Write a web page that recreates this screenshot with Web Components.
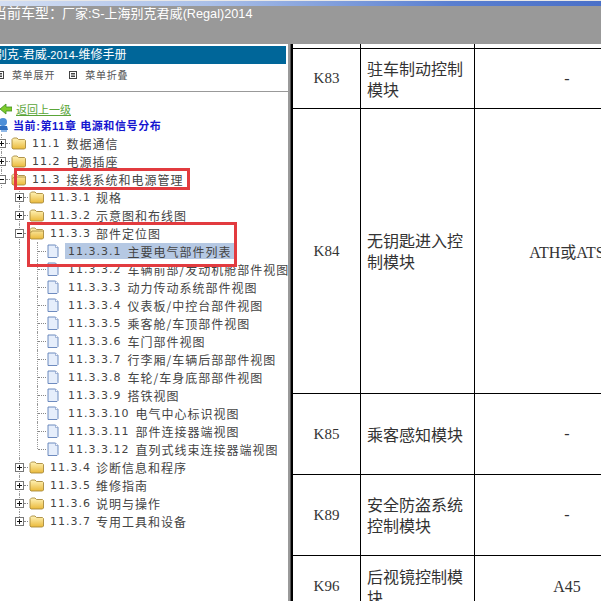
<!DOCTYPE html>
<html>
<head>
<meta charset="utf-8">
<style>
html, body { margin: 0; padding: 0; width: 601px; height: 601px; overflow: hidden; background: #fff; }
main-page { font-family: "Noto Sans CJK SC", sans-serif; }
</style>
</head>
<body>
<main-page></main-page>
<script>
const CJK = '"Noto Sans CJK SC", sans-serif';

window.customElements.define('top-bar', class extends HTMLElement {
    constructor(){
        super();
        this.attachShadow({mode:'open'}).innerHTML = `
            <style>
                :host { display: block; height: 44px; background: #999999; overflow: hidden; }
                #strip { height: 6px; background: linear-gradient(90deg, #d3def2 0%, #a9bfe8 35%, #5a7fd0 75%, #4a70c8 100%); border-top: 1px solid #e8e8e8; box-sizing: border-box; }
                #title { margin: -5px 0 0 -7px; color: #fff; font: 13px/24px "Liberation Sans", ${CJK}; white-space: nowrap; }
                #title b { font-weight: normal; font-size: 14px; margin-right: -1px; }
                #title i { font-style: normal; font-size: 12.7px; }
            </style>
            <div id="strip"></div>
            <div id="title"><b>当前车型：</b>厂家:S-上海别克君威<i>(Regal)2014</i></div>
        `;
    }
});

window.customElements.define('menu-icon', class extends HTMLElement {
    constructor(){
        super();
        this.attachShadow({mode:'open'}).innerHTML = `
            <style>:host { display: inline-flex; width: 8px; height: 8px; }</style>
            <svg width="8" height="8" viewBox="0 0 8 8" fill="none" stroke="#444">
                <rect x=".5" y=".5" width="7" height="7" fill="#fff"/>
                <path d="M2 2.5h4M2 4h4M2 5.5h4"/>
            </svg>
        `;
    }
});

window.customElements.define('tree-row', class extends HTMLElement {
    constructor(){
        super();
        const level = +this.getAttribute('level'),
        type = this.getAttribute('type'),
        num = this.getAttribute('num'),
        label = this.getAttribute('label'),
        selected = this.hasAttribute('selected'),
        last = this.hasAttribute('last'),
        tail = this.hasAttribute('tail');

        const expander = (sign) => `
            <svg class="exp" width="9" height="9" viewBox="0 0 9 9" fill="none">
                <rect x=".5" y=".5" width="8" height="8" fill="#fff" stroke="#777"/>
                <path d="M2 4.5h5${sign == 'plus' ? 'M4.5 2v5' : ''}" stroke="#111"/>
            </svg>`;
        const folder = () => `
            <svg class="ico" width="15" height="14" viewBox="0 0 15 14">
                <defs><linearGradient id="f" x1="0" y1="0" x2="0" y2="1"><stop offset="0" stop-color="#fff3b8"/><stop offset="1" stop-color="#eab93a"/></linearGradient></defs>
                <path d="M1 12V3.5L2.5 2h3.5L7.5 3.5h6l1 1V12l-1 1H2z" fill="url(#f)" stroke="#a88a3c" stroke-width=".9"/>
                ${type == 'open' ? '<path d="M1.5 7L3 5h11.5" fill="none" stroke="#a88a3c" stroke-width=".8"/>' : ''}
            </svg>`;
        const file = () => `
            <svg class="ico" width="12" height="14" viewBox="0 0 12 14">
                <path d="M1 1h7.5L11 3.5V12.5L10 13.5H1z" fill="#e6eefb" stroke="#5f7fb8" stroke-width=".9"/>
                <path d="M8.5 1v2.5H11" fill="#fff" stroke="#7f98c6" stroke-width=".7"/>
            </svg>`;

        let head;
        if (type == 'file') {
            head = `<span class="guide" style="width:37px"></span><span class="vline ${last ? 'end' : ''}"></span><span class="hline"></span>${file()}`;
        } else {
            const box = type == 'open' ? 'minus' : 'plus';
            head = `<span class="guide" style="width:${level == 1 ? 0 : 15}px"></span>${expander(box)}<span class="tick"></span>${folder()}`;
        }

        this.attachShadow({mode:'open'}).innerHTML = `
            <style>
                :host { display: flex; align-items: center; height: 18px; position: relative; white-space: nowrap; }
                .guide { display: inline-block; flex: none; }
                .exp { flex: none; position: relative; z-index: 1; ${level == 1 ? 'margin-left:-3px;' : ''} }
                .tick { flex: none; width: 4px; height: 0; border-top: 1px dotted #888; }
                .ico { flex: none; margin-left: ${type == 'file' ? 0 : 1}px; }
                .vline { flex: none; width: 0; height: 18px; border-left: 1px dotted #999; align-self: flex-start; }
                .vline.end { height: 9px; }
                .hline { flex: none; width: 8px; height: 0; border-top: 1px dotted #888; margin-right: 1px; }
                /* the line of the level above runs behind the row */
                #up { position: absolute; left: ${level == 1 ? 1 : 19}px; top: 0; width: 0; height: ${tail ? 9 : 18}px; border-left: 1px dotted #999; }
                #text { display: inline-flex; align-items: center; height: 16px; padding: 0 2px; margin-left: ${type == 'file' ? '7px' : '4px'}; color: #444; ${selected ? 'background:#b5c8e3;margin-left:6px;padding:0 2px 0 3px;' : ''} }
                #num { font: 11px "DejaVu Sans", sans-serif; letter-spacing: 1px; }
                #label { font: 12px ${CJK}; letter-spacing: 1px; margin-left: ${type == 'file' ? 6 : /^11\.\d$/.test(num) ? 6 : 5}px; }
            </style>
            <span id="up"></span>
            ${head}
            <span id="text"><span id="num">${num}</span><span id="label">${label}</span></span>
        `;
    }
});

window.customElements.define('red-box', class extends HTMLElement {
    constructor(){
        super();
        this.attachShadow({mode:'open'}).innerHTML = `
            <style>
                :host { display: block; position: absolute; box-sizing: border-box; border: 3px solid #e23b3f; pointer-events: none; }
            </style>
        `;
    }
});

window.customElements.define('side-panel', class extends HTMLElement {
    constructor(){
        super();
        const rows = [
            [1,'closed','11.1','数据通信'],
            [1,'closed','11.2','电源插座'],
            [1,'open','11.3','接线系统和电源管理'],
            [2,'closed','11.3.1','规格'],
            [2,'closed','11.3.2','示意图和布线图'],
            [2,'open','11.3.3','部件定位图'],
            [3,'file','11.3.3.1','主要电气部件列表','selected'],
            [3,'file','11.3.3.2','车辆前部/发动机舱部件视图'],
            [3,'file','11.3.3.3','动力传动系统部件视图'],
            [3,'file','11.3.3.4','仪表板/中控台部件视图'],
            [3,'file','11.3.3.5','乘客舱/车顶部件视图'],
            [3,'file','11.3.3.6','车门部件视图'],
            [3,'file','11.3.3.7','行李厢/车辆后部部件视图'],
            [3,'file','11.3.3.8','车轮/车身底部部件视图'],
            [3,'file','11.3.3.9','搭铁视图'],
            [3,'file','11.3.3.10','电气中心标识视图'],
            [3,'file','11.3.3.11','部件连接器端视图'],
            [3,'file','11.3.3.12','直列式线束连接器端视图','last'],
            [2,'closed','11.3.4','诊断信息和程序'],
            [2,'closed','11.3.5','维修指南'],
            [2,'closed','11.3.6','说明与操作'],
            [2,'closed','11.3.7','专用工具和设备','tail']
        ];
        this.attachShadow({mode:'open'}).innerHTML = `
            <style>
                :host { display: block; position: relative; height: 557px; overflow: hidden; background: #fff; }
                #head { margin: 2px 2px 0 0; height: 18px; background: #006699; color: #fff; font: 500 11px/18px "Liberation Sans", ${CJK}; white-space: nowrap; }
                #head span { margin-left: -5px; display: inline-block; }
                #head b { font-weight: normal; font-size: 12px; }
                #menu { display: flex; align-items: center; gap: 8px; height: 28px; box-sizing: border-box; padding-bottom: 6px; border-bottom: 1px solid #999; color: #555; font: 10px ${CJK}; letter-spacing: .8px; }
                #menu menu-icon:first-child { margin-left: -4px; }
                #menu .m2 { margin-left: 6px; }
                #back { display: flex; align-items: center; height: 20px; margin-top: 7px; gap: 4px; color: #5aa538; font: 11px ${CJK}; }
                #current { display: flex; align-items: center; height: 14px; margin-top: -1px; gap: 5px; color: #1515d0; font: bold 11px "Liberation Sans", ${CJK}; letter-spacing: .6px; white-space: nowrap; }
                #current svg { margin-left: -1px; }
                #tree { margin-top: 2px; }
                .b1 { left: 14px; top: 124px; width: 176px; height: 22px; }
                .b2 { left: 27px; top: 178px; width: 210px; height: 45px; }
            </style>
            <div id="head"><span><b>别克</b>-<b>君威</b>-2014-<b>维修手册</b></span></div>
            <div id="menu">
                <menu-icon></menu-icon><span>菜单展开</span>
                <menu-icon class="m2"></menu-icon><span>菜单折叠</span>
            </div>
            <div id="back">
                <svg width="12" height="12" viewBox="0 0 12 12"><path d="M0 6L6 1v3h6v4H6v3z" fill="#7ecb2c" stroke="#3f8f1e" stroke-width=".8"/></svg>
                <u>返回上一级</u>
            </div>
            <div id="current">
                <svg width="9" height="14" viewBox="0 0 9 14"><circle cx="4" cy="4" r="4" fill="#4d8fd8"/><path d="M0 8h8l1 4H1z" fill="#2f6fc0"/><path d="M2 12h6v2H2z" fill="#8fb8e8"/></svg>
                <span>当前:第11章 电源和信号分布</span>
            </div>
            <div id="tree">
                ${rows.map(r => `<tree-row level="${r[0]}" type="${r[1]}" num="${r[2]}" label="${r[3]}" ${r[4] || ''}></tree-row>`).join('')}
            </div>
            <red-box class="b1"></red-box>
            <red-box class="b2"></red-box>
        `;
    }
});

window.customElements.define('part-row', class extends HTMLElement {
    constructor(){
        super();
        this.attachShadow({mode:'open'}).innerHTML = `
            <style>
                :host { display: grid; grid-template-columns: 68px 114px 185px; height: var(--h); box-sizing: border-box; border-bottom: 1px solid #000; color: #333; font: 15px "Liberation Serif", ${CJK}; }
                div { display: flex; align-items: center; border-right: 1px solid #000; overflow: hidden; }
                .code, .conn { justify-content: center; }
                .conn { font-size: 16px; }
                .name { padding: 0 6px; font: 16px/21px ${CJK}; color: #333; }
                .name span { display: block; }
            </style>
            <div class="code">${this.getAttribute('code')}</div>
            <div class="name"><span>${this.getAttribute('name')}</span></div>
            <div class="conn">${this.getAttribute('conn')}</div>
        `;
    }
});

window.customElements.define('part-table', class extends HTMLElement {
    constructor(){
        super();
        this.attachShadow({mode:'open'}).innerHTML = `
            <style>
                :host { display: block; height: 557px; overflow: hidden; background: #fff; }
                #inner { width: 367px; }
            </style>
            <div id="inner">
                <part-row code="" name="" conn="" style="--h:5px"></part-row>
                <part-row code="K83" name="驻车制动控制模块" conn="-" style="--h:60px"></part-row>
                <part-row code="K84" name="无钥匙进入控制模块" conn="ATH或ATS" style="--h:285px"></part-row>
                <part-row code="K85" name="乘客感知模块" conn="-" style="--h:81px"></part-row>
                <part-row code="K89" name="安全防盗系统控制模块" conn="-" style="--h:81px"></part-row>
                <part-row code="K96" name="后视镜控制模块" conn="A45" style="--h:62px"></part-row>
            </div>
        `;
    }
});

window.customElements.define('main-page', class extends HTMLElement {
    constructor(){
        super();
        this.attachShadow({mode:'open'}).innerHTML = `
            <style>
                :host { display: block; width: 601px; height: 601px; overflow: hidden; }
                #body { display: grid; grid-template-columns: 288px 5px 308px; }
                #split { background: linear-gradient(90deg, #9a9a9a 0 2px, #555 2px 3px, #000 3px); }
            </style>
            <top-bar></top-bar>
            <div id="body">
                <side-panel></side-panel>
                <div id="split"></div>
                <part-table></part-table>
            </div>
        `;
    }
});
</script>
</body>
</html>
